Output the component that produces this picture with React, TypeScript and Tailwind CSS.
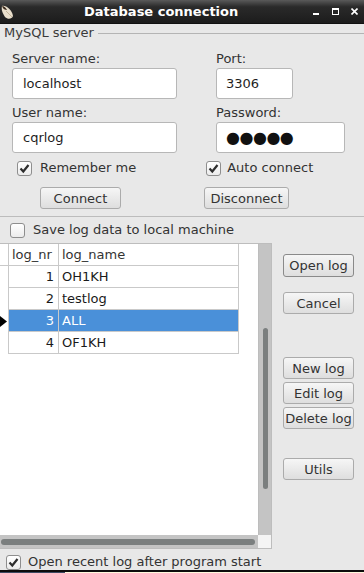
import React from "react";

function Check({ checked = false }: { checked?: boolean }) {
  return (
    <div className="w-[15px] h-[15px] shrink-0 rounded-[3px] border border-[#8e8e8e] bg-linear-to-b from-white to-[#ececec] flex items-center justify-center">
      {checked && (
        <svg width="13" height="13" viewBox="0 0 13 13">
          <path d="M2.5 6.5 L5.3 9.5 L10.5 3" fill="none" stroke="#2e2e2e" strokeWidth="2.2" />
        </svg>
      )}
    </div>
  );
}

function Btn({ label, className = "", strong = false }: { label: string; className?: string; strong?: boolean }) {
  return (
    <div
      className={`flex items-center justify-center rounded-[3px] border bg-linear-to-b from-[#f6f6f6] to-[#dedede] text-[#333] leading-none ${
        strong ? "border-[#8a8a8a]" : "border-[#ababab]"
      } ${className}`}
    >
      {label}
    </div>
  );
}

function Field({ value, className = "", dots = false }: { value: string; className?: string; dots?: boolean }) {
  return (
    <div className={`h-[31px] rounded-[3px] border border-[#b7b7b7] bg-white flex items-center ${className}`}>
      {dots ? (
        <span className="text-[16px] text-[#111] tracking-[-0.5px] leading-none pt-[1px]">●●●●●</span>
      ) : (
        <span className="text-[#1e1e1e]">{value}</span>
      )}
    </div>
  );
}

const rows = [
  { nr: 1, name: "OH1KH" },
  { nr: 2, name: "testlog" },
  { nr: 3, name: "ALL", selected: true },
  { nr: 4, name: "OF1KH" },
];

export default function App() {
  return (
    <div className="w-[364px] h-[573px] overflow-hidden bg-[#e8e8e8] flex flex-col font-['DejaVu_Sans',sans-serif] text-[13px] leading-[16px] text-[#333]">
      {/* Title bar */}
      <div className="h-[24px] shrink-0 flex items-center bg-linear-to-b from-[#5a5a5a] via-[#2a2a2a] via-30% to-[#1c1c1c] border-b border-[#111]">
        <svg width="16" height="20" viewBox="0 0 16 20">
          <path d="M2 4 C6 3 12 8 13 14 C12 17 8 18 5 15 C3 12 1 8 2 4 Z" fill="#e9dfcc" />
          <path d="M2 4 C4 4 6 6 7 8 C5 8 3 7 2 4 Z" fill="#3b2a1c" />
          <path d="M6 9 C8 11 10 13 12 15" stroke="#b9a98e" strokeWidth="0.8" fill="none" />
        </svg>
        <span className="ml-[68px] font-bold text-white text-[13px]">Database connection</span>
        <div className="ml-auto flex items-center">
          <div className="w-[6px] h-[2px] bg-white mt-[4px] mr-[13px]" />
          <div className="w-[7px] h-[7px] border border-white border-t-2 mr-[12px]" />
          <svg width="7" height="7" viewBox="0 0 7 7" className="mr-[6px]">
            <path d="M0.5 0.5 L6.5 6.5 M6.5 0.5 L0.5 6.5" stroke="white" strokeWidth="1.6" />
          </svg>
        </div>
      </div>

      {/* MySQL server group */}
      <div className="mt-[1px] h-[16px] flex items-center pl-[4px]">
        <span className="text-[#3a3a3a]">MySQL server</span>
        <div className="flex-1 h-px bg-[#b4b4b4] ml-[4px]" />
      </div>

      <div className="pl-[12px] mt-[10px] grid grid-cols-[165px_129px] gap-x-[39px]">
        <div>
          <div className="h-[16px]">Server name:</div>
          <Field value="localhost" className="mt-[1px] pl-[10px]" />
          <div className="h-[16px] mt-[6px]">User name:</div>
          <Field value="cqrlog" className="mt-[1px] pl-[10px]" />
        </div>
        <div>
          <div className="h-[16px]">Port:</div>
          <Field value="3306" className="mt-[1px] pl-[9px] w-[77px]" />
          <div className="h-[16px] mt-[6px]">Password:</div>
          <Field value="" dots className="mt-[1px] pl-[9px]" />
        </div>
      </div>

      <div className="mt-[7px] h-[16px] flex items-center">
        <div className="ml-[17px]">
          <Check checked />
        </div>
        <span className="ml-[8px]">Remember me</span>
        <div className="ml-[70px]">
          <Check checked />
        </div>
        <span className="ml-[6px]">Auto connect</span>
      </div>

      <div className="mt-[11px] h-[22px] flex">
        <Btn label="Connect" className="ml-[40px] w-[81px]" />
        <Btn label="Disconnect" className="ml-[83px] w-[85px]" />
      </div>

      <div className="mt-[7px] h-px bg-[#bcbcbc]" />

      <div className="mt-[5px] h-[16px] flex items-center">
        <div className="ml-[10px]">
          <Check />
        </div>
        <span className="ml-[8px]">Save log data to local machine</span>
      </div>

      {/* Grid + side buttons */}
      <div className="mt-[5px] flex">
        <div className="w-[272px] h-[306px] flex flex-col border-t border-r border-b border-[#bdbdbd]">
          <div className="flex-1 flex min-h-0">
            <div className="flex-1 bg-white">
              <div className="flex h-[22px] border-b border-[#c9c9c9] w-[239px]">
                <div className="w-[9px] border-r border-[#c9c9c9]" />
                <div className="w-[50px] border-r border-[#c9c9c9] pl-[3px] flex items-center">log_nr</div>
                <div className="w-[180px] border-r border-[#c9c9c9] pl-[3px] flex items-center">log_name</div>
              </div>
              {rows.map((r) => (
                <div key={r.nr} className="flex h-[22px] w-[239px]">
                  <div className="w-[9px] border-r border-[#c9c9c9] flex items-center">
                    {r.selected && (
                      <svg width="7" height="11" viewBox="0 0 7 11">
                        <path d="M0 0 L7 5.5 L0 11 Z" fill="#000" />
                      </svg>
                    )}
                  </div>
                  <div
                    className={`w-[50px] border-r border-b border-[#c9c9c9] pr-[4px] flex items-center justify-end ${
                      r.selected ? "bg-[#4a90d9] text-white" : "text-[#1a1a1a]"
                    }`}
                  >
                    {r.nr}
                  </div>
                  <div
                    className={`w-[180px] border-r border-b border-[#c9c9c9] pl-[3px] flex items-center ${
                      r.selected ? "bg-[#4a90d9] text-white" : "text-[#1a1a1a]"
                    }`}
                  >
                    {r.name}
                  </div>
                </div>
              ))}
            </div>
            <div className="w-[13px] bg-[#c4c4c4] border-l border-[#bdbdbd] relative">
              <div className="absolute left-[4px] top-[84px] w-[5px] h-[161px] rounded-full bg-[#7b7f7f]" />
            </div>
          </div>
          <div className="h-[13px] flex">
            <div className="flex-1 bg-[#c4c4c4] flex items-center pl-[1px] pr-[3px]">
              <div className="h-[6px] w-full rounded-full bg-[#7b7f7f]" />
            </div>
            <div className="w-[13px] bg-[#f4f4f4]" />
          </div>
        </div>

        <div className="ml-[11px] w-[71px] flex flex-col">
          <Btn label="Open log" strong className="mt-[11px] h-[23px]" />
          <Btn label="Cancel" className="mt-[15px] h-[22px]" />
          <Btn label="New log" className="mt-[43px] h-[22px]" />
          <Btn label="Edit log" className="mt-[3px] h-[22px]" />
          <Btn label="Delete log" className="mt-[3px] h-[22px]" />
          <Btn label="Utils" className="mt-[29px] h-[22px]" />
        </div>
      </div>

      <div className="mt-[5px] h-[16px] flex items-center">
        <div className="ml-[6px]">
          <Check checked />
        </div>
        <span className="ml-[7px]">Open recent log after program start</span>
      </div>

      <div className="mt-[0px] h-[2px] bg-[#0c0c0c]" />
      <div className="h-[1px] flex">
        <div className="w-[65px] bg-[#3c4a62]" />
        <div className="flex-1 bg-[#fdf8dc]" />
      </div>
    </div>
  );
}
